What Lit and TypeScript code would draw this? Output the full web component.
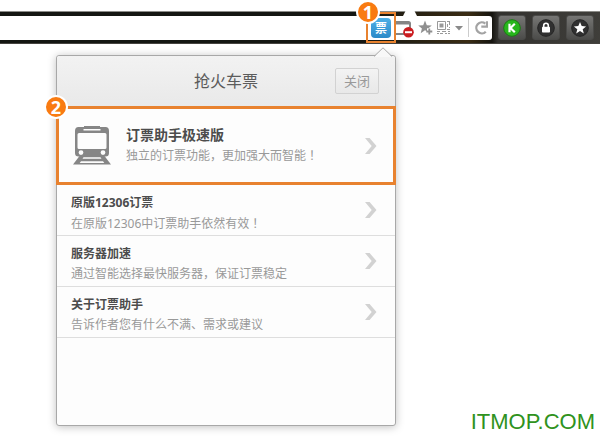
import { LitElement, html, css, svg } from "lit";
import { customElement, property } from "lit/decorators.js";

const chevron = html`<svg class="chevron" width="12" height="16" viewBox="0 0 12 16" aria-hidden="true">
  <path d="M0 0h4.600L11.500 8l-6.900 8H0l6.700-8z" fill="#d2d2d2" />
</svg>`;

const train = html`<svg class="train" width="38" height="39" viewBox="0 0 38 39" aria-hidden="true">
  <path fill="#868686" fill-rule="evenodd"
    d="M11 0h16v1h5.500q3.500 0 3.500 4v22q0 3.500-3.500 3.500h-27Q2 30.500 2 27V5q0-4 3.500-4H11z
       M10.500 3v1.400h17V3z M6 7q-1.500 0-1.500 1.500V21.500Q4.500 23 6 23h26q1.500 0 1.500-1.500V8.500q0-1.500-1.500-1.500z
       M8 24.200a2.400 2.400 0 1 0 0 4.800a2.400 2.400 0 1 0 0-4.800z M30 24.200a2.400 2.400 0 1 0 0 4.800a2.400 2.400 0 1 0 0-4.800z" />
  <path fill="#868686" fill-rule="evenodd"
    d="M6.500 30h25L38 38.500H0z M10.500 31.300L9.500 32.800h19l-1-1.500z M8 35.200L6.700 36.900h24.600L30 35.200z" />
</svg>`;

const toolButtons = [
  {
    label: "K",
    icon: svg`<circle cx="10" cy="10" r="8.300" fill="#27b51c" stroke="#1b7a14" />
      <path d="M7.500 5.800v8.400M12.800 5.800L8.500 10l4.300 4.200" stroke="#fff" stroke-width="2.200" fill="none" />`,
  },
  {
    label: "锁定",
    icon: svg`<circle cx="10" cy="10" r="8.300" fill="#303030" stroke="#242424" />
      <path d="M7.700 9V7.500a2.300 2.300 0 0 1 4.600 0V9" stroke="#fff" stroke-width="1.600" fill="none" />
      <rect x="6" y="8.800" width="8" height="5.700" rx="0.800" fill="#fff" />`,
  },
  {
    label: "收藏夹",
    icon: svg`<circle cx="10" cy="10" r="8.300" fill="#303030" stroke="#242424" />
      <path d="M10 4l1.700 4.100 4.400.3-3.400 2.800 1.100 4.300L10 13.100l-3.800 2.400 1.100-4.300-3.400-2.800 4.400-.3z" fill="#fff" />`,
  },
];

@customElement("address-bar")
export class AddressBar extends LitElement {
  static styles = css`
    :host {
      display: flex;
      align-items: center;
      gap: 6px;
      height: 33px;
      padding-right: 6px;
      box-sizing: border-box;
      border-top: 1px solid #8c8c88;
      border-bottom: 1px solid #45433f;
      background: linear-gradient(90deg, #141612 60%, #3a2c14 78%, #15140f 82%, #33322f 83%, #3f3e3a);
      position: relative;
    }
    button {
      border: 0;
      padding: 0;
      margin: 0;
      background: none;
      display: flex;
      align-items: center;
      justify-content: center;
      font-family: "Noto Sans CJK SC", sans-serif;
    }
    .field {
      flex: 1;
      min-width: 0;
      height: 24px;
      display: flex;
      align-items: center;
      background: #fff;
      border-radius: 0 3px 3px 0;
    }
    .url {
      flex: 1;
      min-width: 0;
      height: 20px;
      border: 0;
      padding: 0 8px;
      background: none;
      outline: none;
    }
    .target {
      position: relative;
      flex: none;
      height: 31px;
      width: 30px;
      box-sizing: border-box;
      border: 2px solid #e8822f;
      display: flex;
      align-items: center;
      justify-content: center;
    }
    .ticket {
      width: 20px;
      height: 20px;
      border-radius: 4px;
      background: linear-gradient(#4fb0e6, #2b8ac8);
      color: #fff;
      font-size: 12px;
      font-weight: 700;
      line-height: 20px;
    }
    .target step-badge {
      position: absolute;
      left: -12px;
      top: -14px;
    }
    .notch {
      position: absolute;
      left: 7px;
      top: -8px;
    }
    .blocked {
      position: relative;
      display: flex;
      margin-right: 4px;
    }
    .divider {
      width: 1px;
      height: 19px;
      background: #ccc;
      margin: 0 4px 0 2px;
    }
    .field svg {
      display: block;
      flex: none;
    }
    .star {
      margin-right: 2px;
    }
    .tool {
      flex: none;
      width: 28px;
      height: 25px;
      box-sizing: border-box;
      border: 1px solid #4a4a48;
      border-radius: 3px;
      background: linear-gradient(#767674, #4c4c4a);
    }
  `;

  render() {
    return html`
      <div class="field">
        <input class="url" type="text" aria-label="地址栏" />
        <div class="target">
          <button class="ticket">票</button>
          <step-badge number="1"></step-badge>
        </div>
        <div class="blocked">
          <button aria-label="已拦截窗口">
            <svg width="18" height="20" viewBox="0 0 18 20">
              <path d="M0 4h12.500q1.500 0 1.500 1.500V16H0" fill="none" stroke="#858585" stroke-width="2" />
              <path d="M0 5h13" stroke="#858585" stroke-width="3" />
              <circle cx="12.500" cy="14.200" r="5.300" fill="#cb1d20" />
              <path d="M9 14.200h7" stroke="#fff" stroke-width="2" />
            </svg>
          </button>
          <svg class="notch" width="14" height="6" viewBox="0 0 14 6" aria-hidden="true">
            <path d="M3 0h8l3 6H0z" fill="#fff" />
          </svg>
        </div>
        <button class="star" aria-label="收藏">
          <svg width="16" height="20" viewBox="0 0 16 20">
            <path d="M7 2.500l1.800 4.700 5 .3-3.400 2.800H9v3l-2-1-4.300 3 1.200-4.900L.2 7.500l5-.3z" fill="#8f8f8f" />
            <path d="M11.300 10.500v6M8.300 13.500h6" stroke="#8f8f8f" stroke-width="1.800" />
          </svg>
        </button>
        <button aria-label="二维码">
          <svg width="16" height="20" viewBox="0 0 16 20">
            <g fill="none" stroke="#999">
              <path d="M1.500 3.500h8v8h-8z M11 3.500h3M13.500 3v4M11.500 6v3M13 9.500h1M11 11.500h3" />
              <path d="M1 13.500h3M6 13.500h4M12 13.500h2M1 15.500h2M4 15.500h3M9 15.500h2M12 15.500h2" />
            </g>
            <path d="M3.500 5.500h4v4h-4z" fill="#999" />
          </svg>
        </button>
        <button aria-label="更多">
          <svg width="14" height="20" viewBox="0 0 14 20">
            <path d="M3 8h8l-4 4.500z" fill="#8a8a8a" />
          </svg>
        </button>
        <span class="divider"></span>
        <button aria-label="刷新">
          <svg width="19" height="20" viewBox="0 0 19 20">
            <path d="M12.300 5.600A5.500 5.500 0 1 0 12.800 13.700" fill="none" stroke="#a3a3a3" stroke-width="2.300" />
            <path d="M15 3.200V9.800H8.300V7.600h4.600V3.200z" fill="#a3a3a3" />
          </svg>
        </button>
      </div>
      ${toolButtons.map(
        (t) => html`<button class="tool" aria-label=${t.label}>
          <svg width="20" height="20" viewBox="0 0 20 20">${t.icon}</svg>
        </button>`
      )}
    `;
  }
}

@customElement("step-badge")
export class StepBadge extends LitElement {
  @property() number = "";

  static styles = css`
    :host {
      box-sizing: border-box;
      width: 24px;
      height: 24px;
      border: 2px solid #fff;
      border-radius: 50%;
      background: #f97b11;
      color: #fff;
      font: 700 18px/20px "Noto Sans", sans-serif;
      text-align: center;
      z-index: 2;
    }
  `;

  render() {
    return html`${this.number}`;
  }
}

const entries = [
  { title: "原版12306订票", text: "在原版12306中订票助手依然有效！" },
  { title: "服务器加速", text: "通过智能选择最快服务器，保证订票稳定" },
  { title: "关于订票助手", text: "告诉作者您有什么不满、需求或建议" },
];

/* Exclamation marks are set centred in their em square. */
const centred = (text: string) =>
  text.split(/(！)/).map((part) => (part === "！" ? html`<span class="mark" lang="zh-Hant">${part}</span>` : part));

@customElement("ticket-popup")
export class TicketPopup extends LitElement {
  static styles = css`
    :host {
      display: block;
      position: relative;
      box-sizing: border-box;
      width: 340px;
      min-height: 371px;
      border: 1px solid #a8a8a8;
      border-radius: 3px;
      background: #fdfdfd;
      box-shadow: 0 1px 8px rgba(0, 0, 0, 0.25);
      font-family: "Noto Sans", "Noto Sans CJK SC", sans-serif;
    }
    .tip {
      position: absolute;
      right: 3px;
      top: -9px;
    }
    header {
      display: grid;
      grid-template-columns: 1fr auto 1fr;
      align-items: center;
      height: 50px;
      padding: 0 16px;
      border-radius: 3px 3px 0 0;
      background: linear-gradient(#f2f2f2, #e9e9e9);
    }
    h1 {
      grid-column: 2;
      margin: 0;
      font-size: 16px;
      font-weight: 400;
      line-height: 24px;
      color: #5c5c5c;
    }
    .close {
      justify-self: end;
      width: 44px;
      height: 26px;
      padding: 0;
      border: 1px solid #d2d2d2;
      border-radius: 2px;
      background: linear-gradient(#f3f3f3, #e8e8e8);
      color: #999;
      font-family: inherit;
      font-size: 13px;
      line-height: 20px;
    }
    ul {
      list-style: none;
      margin: 0;
      padding: 0;
    }
    a {
      display: flex;
      align-items: center;
      height: 50px;
      padding: 0 18px 0 14px;
      border-bottom: 1px solid #dedede;
      text-decoration: none;
      color: #999;
      font-size: 12px;
      line-height: 20px;
    }
    .body {
      flex: 1;
      padding-top: 6px;
    }
    strong {
      display: block;
      color: #4c4c4c;
    }
    .mark {
      font-family: "Noto Sans CJK TC", sans-serif;
    }
    .featured {
      position: relative;
      margin: 0 -1px;
    }
    .featured a {
      height: 73px;
      padding: 0 16px 0 14px;
      gap: 15px;
      border: 3px solid #e8822f;
    }
    .featured .body {
      padding: 0;
    }
    .featured strong {
      font-size: 14px;
    }
    .featured step-badge {
      position: absolute;
      left: -12px;
      top: -11px;
    }
    svg {
      flex: none;
    }
  `;

  render() {
    return html`
      <svg class="tip" width="18" height="10" viewBox="0 0 18 10" aria-hidden="true">
        <path d="M0 10L9 .8 18 10z" fill="#f8f8f8" />
        <path d="M0 9.500L9 .8l9 8.700" fill="none" stroke="#a8a8a8" />
      </svg>
      <header>
        <h1>抢火车票</h1>
        <button class="close">关闭</button>
      </header>
      <ul>
        <li class="featured">
          <a href="#">
            ${train}
            <span class="body"><strong>订票助手极速版</strong>${centred("独立的订票功能，更加强大而智能！")}</span>
            ${chevron}
          </a>
          <step-badge number="2"></step-badge>
        </li>
        ${entries.map(
          (e) => html`<li>
            <a href="#"><span class="body"><strong>${e.title}</strong>${centred(e.text)}</span>${chevron}</a>
          </li>`
        )}
      </ul>
    `;
  }
}

@customElement("app-root")
export class AppRoot extends LitElement {
  static styles = css`
    :host {
      display: block;
      box-sizing: border-box;
      min-height: 100vh;
      padding-top: 11px;
      background: #fff;
    }
    main {
      display: flex;
      justify-content: space-between;
      align-items: flex-end;
      padding: 11px 5px 0 56px;
    }
    ticket-popup {
      margin-bottom: 8px;
    }
    .site {
      color: #2f9220;
      font: 22px/24px "Liberation Sans", sans-serif;
    }
  `;

  render() {
    return html`
      <address-bar></address-bar>
      <main>
        <ticket-popup></ticket-popup>
        <span class="site">ITMOP.COM</span>
      </main>
    `;
  }
}
